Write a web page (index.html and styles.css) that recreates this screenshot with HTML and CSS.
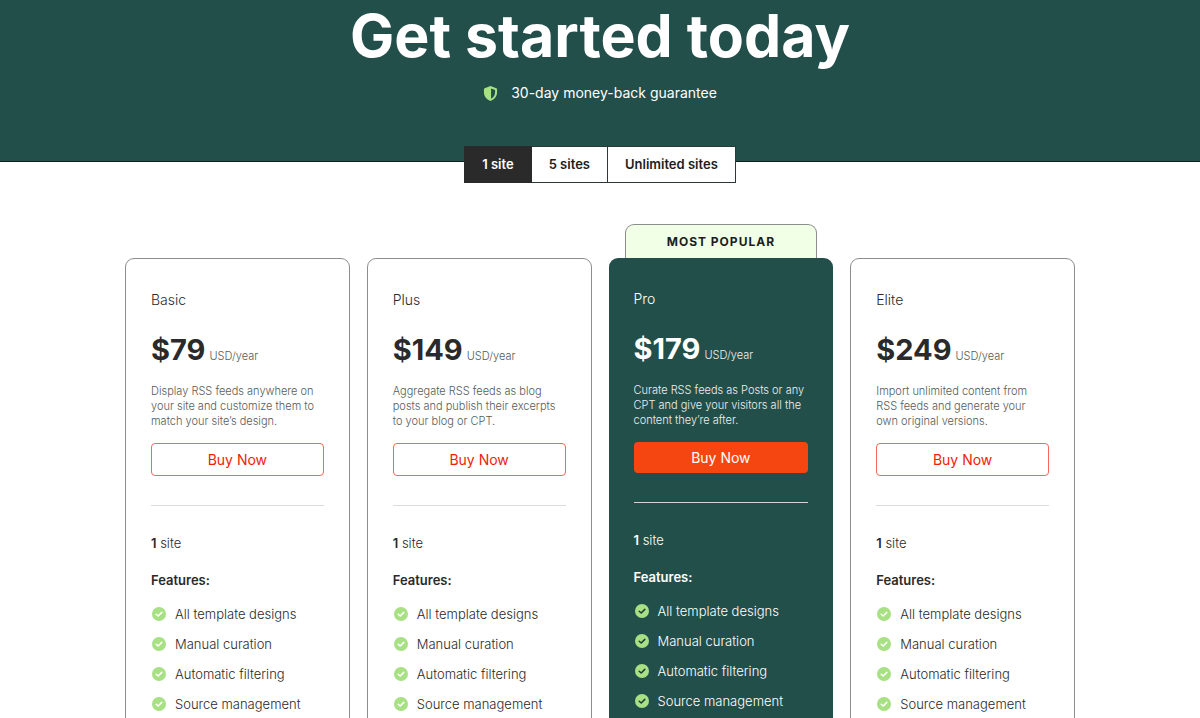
FILE: index.html
```html
<!DOCTYPE html>
<html lang="en">
<head>
  <meta charset="UTF-8" />
  <meta name="viewport" content="width=device-width, initial-scale=1" />
  <title>Get started today</title>
  <link rel="stylesheet" href="styles.css">
</head>
<body>

  <!-- shared icons -->
  <svg class="sprite" aria-hidden="true">
    <symbol id="shield" viewBox="0 0 16 18">
      <path fill="#a8e084" fill-rule="evenodd" d="M8 1 L14.2 3.3 Q15 3.6 15 4.5 V7.5 C15 12 12.500 15.400 8 17 C3.500 15.400 1 12 1 7.500 V4.500 Q1 3.600 1.800 3.300 Z M8.600 3.600 V14.500 C11.500 13.100 12.900 10.700 12.900 7.500 V5.200 Z" />
    </symbol>
    <symbol id="check" viewBox="0 0 14 14">
      <circle cx="7" cy="7" r="7" fill="#a8e084" />
      <path d="M4.200 7.200 L6.200 9 L9.800 5.400" fill="none" stroke="currentColor" stroke-width="1.500" stroke-linecap="round" stroke-linejoin="round" />
    </symbol>
  </svg>

  <header class="hero">
    <h1>Get started today</h1>
    <p class="guarantee">
      <svg class="shield"><use href="#shield" /></svg>
      30-day money-back guarantee
    </p>
  </header>

  <main>
    <div class="tabs">
      <button type="button" class="tab active">1 site</button>
      <button type="button" class="tab">5 sites</button>
      <button type="button" class="tab">Unlimited sites</button>
    </div>

    <div class="plans">
      <section class="plan">
        <h2>Basic</h2>
        <p class="price"><strong>$79</strong> <span>USD/year</span></p>
        <p class="desc">Display RSS feeds anywhere on your site and customize them to match your site’s design.</p>
        <button type="button" class="buy">Buy Now</button>
        <hr>
        <p class="sites"><b>1</b> site</p>
        <h3>Features:</h3>
        <ul>
          <li><svg><use href="#check" /></svg>All template designs</li>
          <li><svg><use href="#check" /></svg>Manual curation</li>
          <li><svg><use href="#check" /></svg>Automatic filtering</li>
          <li><svg><use href="#check" /></svg>Source management</li>
        </ul>
      </section>

      <section class="plan">
        <h2>Plus</h2>
        <p class="price"><strong>$149</strong> <span>USD/year</span></p>
        <p class="desc">Aggregate RSS feeds as blog posts and publish their excerpts to your blog or CPT.</p>
        <button type="button" class="buy">Buy Now</button>
        <hr>
        <p class="sites"><b>1</b> site</p>
        <h3>Features:</h3>
        <ul>
          <li><svg><use href="#check" /></svg>All template designs</li>
          <li><svg><use href="#check" /></svg>Manual curation</li>
          <li><svg><use href="#check" /></svg>Automatic filtering</li>
          <li><svg><use href="#check" /></svg>Source management</li>
        </ul>
      </section>

      <section class="plan popular">
        <div class="ribbon">MOST POPULAR</div>
        <h2>Pro</h2>
        <p class="price"><strong>$179</strong> <span>USD/year</span></p>
        <p class="desc">Curate RSS feeds as Posts or any CPT and give your visitors all the content they’re after.</p>
        <button type="button" class="buy">Buy Now</button>
        <hr>
        <p class="sites"><b>1</b> site</p>
        <h3>Features:</h3>
        <ul>
          <li><svg><use href="#check" /></svg>All template designs</li>
          <li><svg><use href="#check" /></svg>Manual curation</li>
          <li><svg><use href="#check" /></svg>Automatic filtering</li>
          <li><svg><use href="#check" /></svg>Source management</li>
        </ul>
      </section>

      <section class="plan">
        <h2>Elite</h2>
        <p class="price"><strong>$249</strong> <span>USD/year</span></p>
        <p class="desc">Import unlimited content from RSS feeds and generate your own original versions.</p>
        <button type="button" class="buy">Buy Now</button>
        <hr>
        <p class="sites"><b>1</b> site</p>
        <h3>Features:</h3>
        <ul>
          <li><svg><use href="#check" /></svg>All template designs</li>
          <li><svg><use href="#check" /></svg>Manual curation</li>
          <li><svg><use href="#check" /></svg>Automatic filtering</li>
          <li><svg><use href="#check" /></svg>Source management</li>
        </ul>
      </section>
    </div>
  </main>

</body>
</html>
```

FILE: styles.css
```css
* {
  box-sizing: border-box;
}
body {
  margin: 0;
  font-family: Inter, "Liberation Sans", sans-serif;
  color: #2a2a2a;
  background: #fff;
}
h1, h2, h3, p, ul {
  margin: 0;
}
.sprite {
  display: none;
}
.hero {
  background: #234f4b;
  color: #fff;
  border-bottom: 1px solid #111f1d;
  padding: 0 20px 58px;
  text-align: center;
}
.hero h1 {
  font-size: 59px;
  line-height: 72px;
  font-weight: 700;
}
.guarantee {
  display: flex;
  justify-content: center;
  align-items: center;
  gap: 13px;
  margin-top: 11px;
  font-size: 14px;
  line-height: 20px;
  font-weight: 400;
}
.shield {
  width: 15px;
  height: 17px;
}
.tabs {
  display: flex;
  justify-content: center;
  margin-top: -16px;
}
.tab {
  font: 600 13px/18px Inter, "Liberation Sans", sans-serif;
  color: #1d1d1d;
  background: #fff;
  border: 1px solid #2a3a38;
  padding: 8px 17px 9px;
  cursor: pointer;
}
.tab + .tab {
  border-left: 0;
}
.tab.active {
  background: #2a2a2a;
  border-color: #2a2a2a;
  color: #fff;
}
.plans {
  display: grid;
  grid-template-columns: repeat(4, 1fr);
  gap: 17px;
  max-width: 950px;
  margin: 75px auto 0;
}
.plan {
  position: relative;
  border: 1px solid #8a8f8e;
  border-radius: 9px;
  padding: 31px 25px 60px;
}
.plan h2 {
  font-size: 14px;
  line-height: 20px;
  font-weight: 300;
}
.price {
  display: flex;
  align-items: baseline;
  gap: 4px;
  margin-top: 20px;
  font-size: 11px;
  font-weight: 300;
  line-height: 40px;
}
.price strong {
  font-size: 29px;
  font-weight: 700;
}
.price span,
.desc {
  color: #555c5a;
}
.desc {
  margin-top: 8px;
  font-size: 11px;
  line-height: 15px;
  font-weight: 300;
}
.buy {
  width: 100%;
  margin-top: 14px;
  padding: 6px;
  border: 1px solid #f0695a;
  border-radius: 4px;
  background: #fff;
  color: #ee2204;
  font: 400 14px/19px Inter, "Liberation Sans", sans-serif;
  cursor: pointer;
}
.plan hr {
  height: 1px;
  margin: 29px 0 27px;
  border: 0;
  background: #dcdcdc;
}
.sites {
  font-size: 13px;
  line-height: 20px;
  font-weight: 300;
}
.sites b {
  font-weight: 600;
}
.plan h3 {
  margin-top: 17px;
  font-size: 13px;
  line-height: 20px;
  font-weight: 600;
}
.plan ul {
  display: grid;
  gap: 10px;
  margin-top: 14px;
  padding: 0;
  list-style: none;
}
.plan li {
  display: flex;
  align-items: center;
  gap: 9px;
  padding-left: 1px;
  font-size: 13px;
  line-height: 20px;
  font-weight: 300;
}
.plan li svg {
  width: 14px;
  height: 14px;
  color: #fff;
}

/* highlighted plan */
.plan.popular {
  border: 0;
  background: #234f4b;
  color: #fff;
}
.popular .price span,
.popular .desc {
  color: #f0f0ee;
}
.popular .buy {
  border: 0;
  background: #f54612;
  color: #fff;
}
.popular li svg {
  color: #1d3b37;
}
.popular hr {
  background: #cfd6d3;
}
.ribbon {
  position: absolute;
  left: 16px;
  right: 16px;
  bottom: 100%;
  padding: 7px 0 6px;
  border: 1px solid #8a8f8e;
  border-bottom: 0;
  border-radius: 9px 9px 0 0;
  background: #f0ffe6;
  color: #1d1d1d;
  font-size: 12px;
  line-height: 20px;
  font-weight: 700;
  letter-spacing: 1px;
  text-align: center;
}
@media (max-width: 960px) {
  .plans {
    grid-template-columns: repeat(2, 1fr);
    row-gap: 50px;
    padding: 0 16px;
  }
}
```
